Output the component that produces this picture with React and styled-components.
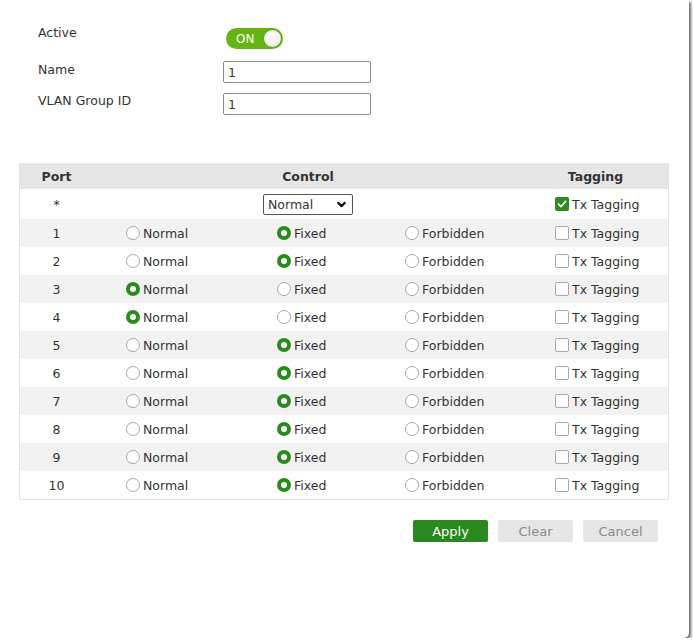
import React from 'react';
import styled, { createGlobalStyle } from 'styled-components';
import { ChevronDown } from 'lucide-react';

const GlobalStyle = createGlobalStyle`
  html, body {
    margin: 0;
    padding: 0;
    background: #ffffff;
  }
  body {
    font-family: "DejaVu Sans", "Liberation Sans", sans-serif;
    font-size: 12.5px;
    color: #333;
  }
`;

// styles
const Dialog = styled.div`
  width: 689px;
  height: 638px;
  box-sizing: border-box;
  background: #fff;
  border-radius: 0 0 5px 0;
  box-shadow: 2px 2px 3px rgba(0, 0, 0, 0.6);
  padding: 28px 21px 0 19px;
  display: flex;
  flex-direction: column;
`;

const Form = styled.div`
  display: flex;
  flex-direction: column;
  padding-left: 19px;
`;

const FieldRow = styled.div`
  display: flex;
  align-items: flex-start;
  margin-top: ${({ $gap }) => $gap || 0}px;
`;

const Label = styled.div`
  width: 185px;
  line-height: 16px;
  margin-top: ${({ $offset }) => $offset}px;
  color: #333;
`;

const Toggle = styled.div`
  width: 57px;
  height: 21px;
  box-sizing: border-box;
  border-radius: 11px;
  background: #64b514;
  display: flex;
  align-items: center;
  justify-content: space-between;
  padding: 0 1px 0 10px;
  margin-left: 3px;
  color: #fff;
  font-size: 12px;
`;

const Knob = styled.span`
  width: 19px;
  height: 19px;
  box-sizing: border-box;
  border-radius: 50%;
  background: radial-gradient(circle at 40% 40%, #ffffff 0%, #f1f1f1 60%, #dcdcdc 100%);
  border: 1px solid #5aa612;
`;

const TextInput = styled.input`
  width: 148px;
  height: 22px;
  box-sizing: border-box;
  border: 1px solid #8a8a8a;
  border-radius: 2px;
  padding: 0 4px;
  font-family: inherit;
  font-size: 12.5px;
  color: #333;
  outline: none;
`;

const Table = styled.div`
  margin-top: 48px;
  width: 650px;
  border: 1px solid #e2e2e2;
  border-top: none;
  box-sizing: border-box;
`;

const Row = styled.div`
  display: grid;
  grid-template-columns: 73px 184px 128px 118px 1fr;
  align-items: center;
  height: ${({ $h }) => $h || 28}px;
  background: ${({ $bg }) => $bg || '#fff'};
`;

const HeadCell = styled.div`
  font-weight: bold;
  text-align: center;
  grid-column: ${({ $span }) => $span || 'auto'};
  color: #333;
`;

const PortCell = styled.div`
  text-align: center;
`;

const OptionCell = styled.label`
  display: flex;
  align-items: center;
  gap: 3px;
  padding-left: ${({ $pad }) => $pad || 0}px;
  grid-column: ${({ $col }) => $col || 'auto'};
`;

const CenterCell = styled.div`
  grid-column: ${({ $span }) => $span};
  display: flex;
  justify-content: center;
`;

const Radio = styled.span`
  width: 14px;
  height: 14px;
  box-sizing: border-box;
  border-radius: 50%;
  background: #fff;
  border: ${({ $on }) => ($on ? '4px solid #2b8a1f' : '1px solid #a8a8a8')};
  flex-shrink: 0;
`;

const Check = styled.span`
  width: 14px;
  height: 14px;
  box-sizing: border-box;
  border-radius: 2px;
  background: ${({ $on }) => ($on ? '#2e8b22' : '#fff')};
  border: ${({ $on }) => ($on ? 'none' : '1.5px solid #a8a8a8')};
  display: inline-flex;
  align-items: center;
  justify-content: center;
  flex-shrink: 0;
`;

const SelectWrap = styled.div`
  position: relative;
  width: 90px;
  height: 21px;
`;

const Select = styled.select`
  appearance: none;
  width: 100%;
  height: 100%;
  box-sizing: border-box;
  border: 1px solid #555;
  border-radius: 2px;
  background: #fff;
  padding: 0 0 0 4px;
  font-family: inherit;
  font-size: 12.5px;
  color: #333;
  outline: none;
`;

const SelectArrow = styled.span`
  position: absolute;
  right: 5px;
  top: 4px;
  pointer-events: none;
  display: flex;
`;

const Buttons = styled.div`
  display: flex;
  justify-content: flex-end;
  gap: 10px;
  margin-top: 20px;
  padding-right: 10px;
`;

const Button = styled.button`
  width: 75px;
  height: 22px;
  border: none;
  border-radius: 2px;
  font-family: inherit;
  font-size: 13px;
  background: ${({ $primary }) => ($primary ? '#2a891e' : '#e6e6e6')};
  color: ${({ $primary }) => ($primary ? '#fff' : '#8a8a8a')};
  cursor: pointer;
`;

const CheckMark = () => (
  <svg width="10" height="10" viewBox="0 0 10 10">
    <path d="M1.5 5.2 L4 7.6 L8.6 2.4" fill="none" stroke="#fff" strokeWidth="1.8" strokeLinecap="round" strokeLinejoin="round" />
  </svg>
);

// data: 0 = Normal, 1 = Fixed
const ports = [1, 2, 3, 4, 5, 6, 7, 8, 9, 10].map((n) => ({
  n,
  mode: n === 3 || n === 4 ? 0 : 1
}));

const App = () => (
  <>
    <GlobalStyle />
    <Dialog>
      <Form>
        <FieldRow>
          <Label $offset={-3}>Active</Label>
          <Toggle>
            ON
            <Knob />
          </Toggle>
        </FieldRow>
        <FieldRow $gap={12}>
          <Label $offset={1}>Name</Label>
          <TextInput defaultValue="1" />
        </FieldRow>
        <FieldRow $gap={10}>
          <Label $offset={0}>VLAN Group ID</Label>
          <TextInput defaultValue="1" />
        </FieldRow>
      </Form>

      <Table>
        <Row $h={26} $bg="#e6e6e6">
          <HeadCell>Port</HeadCell>
          <HeadCell $span="2 / 5">Control</HeadCell>
          <HeadCell>Tagging</HeadCell>
        </Row>
        <Row $h={30}>
          <PortCell>*</PortCell>
          <CenterCell $span="2 / 5">
            <SelectWrap>
              <Select defaultValue="Normal">
                <option>Normal</option>
                <option>Fixed</option>
                <option>Forbidden</option>
              </Select>
              <SelectArrow>
                <ChevronDown size={13} strokeWidth={4} color="#111" />
              </SelectArrow>
            </SelectWrap>
          </CenterCell>
          <OptionCell $pad={32}>
            <Check $on>
              <CheckMark />
            </Check>
            Tx Tagging
          </OptionCell>
        </Row>
        {ports.map((p, i) => (
          <Row key={p.n} $bg={i % 2 === 0 ? '#f2f2f2' : '#fff'}>
            <PortCell>{p.n}</PortCell>
            <OptionCell $pad={33}>
              <Radio $on={p.mode === 0} />
              Normal
            </OptionCell>
            <OptionCell>
              <Radio $on={p.mode === 1} />
              Fixed
            </OptionCell>
            <OptionCell>
              <Radio />
              Forbidden
            </OptionCell>
            <OptionCell $pad={32}>
              <Check />
              Tx Tagging
            </OptionCell>
          </Row>
        ))}
      </Table>

      <Buttons>
        <Button $primary>Apply</Button>
        <Button>Clear</Button>
        <Button>Cancel</Button>
      </Buttons>
    </Dialog>
  </>
);

export default App;
